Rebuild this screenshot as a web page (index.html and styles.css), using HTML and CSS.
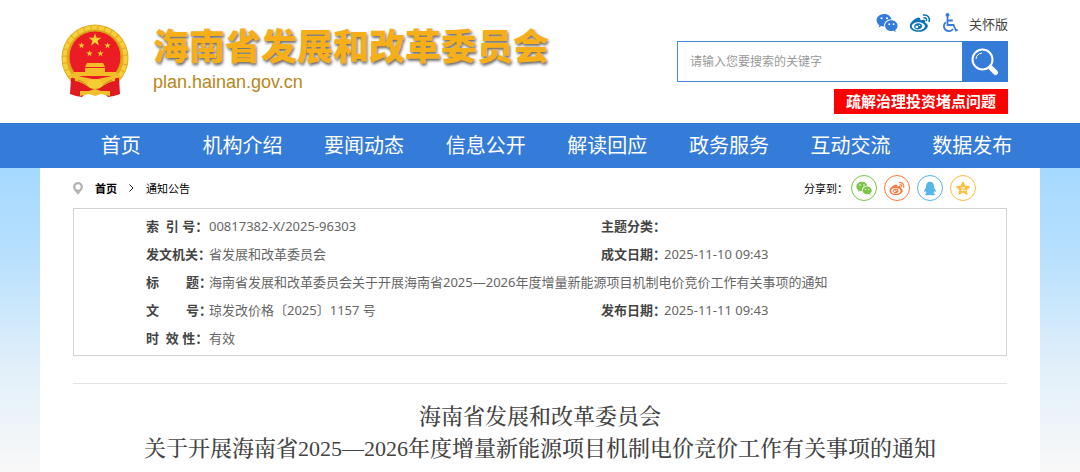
FILE: index.html
```html
<!DOCTYPE html>
<html lang="zh-CN">
<head>
    <meta charset="utf-8">
    <title>海南省发展和改革委员会</title>
    <link rel="stylesheet" href="styles.css">
</head>
<body>
    <svg class="sprite" aria-hidden="true">
        <symbol id="wechat" viewBox="0 0 24 22">
            <path fill="currentColor" fill-rule="evenodd" d="M9 1C4.200 1 .5 4.200.5 8c0 2.200 1.200 4.100 3.100 5.400L2.800 16l3-1.600c1 .3 2.100.5 3.200.5-.9-4.500 3-8.200 8-8C16.200 3.400 13 1 9 1zM6 4.600a1.200 1.200 0 1 1 0 2.400 1.200 1.200 0 0 1 0-2.400zm6 0A1.200 1.200 0 1 1 12 7a1.200 1.200 0 0 1 0-2.400z"/>
            <path fill="currentColor" fill-rule="evenodd" d="M16.800 8c-3.900 0-6.900 2.700-6.900 5.900s3 5.900 6.900 5.900c.8 0 1.700-.1 2.400-.4l2.500 1.400-.7-2.200c1.600-1.100 2.600-2.800 2.600-4.700 0-3.200-3-5.900-6.800-5.900zm-2.300 3.300a1 1 0 1 1 0 2 1 1 0 0 1 0-2zm4.700 0a1 1 0 1 1 0 2 1 1 0 0 1 0-2z"/>
        </symbol>
        <symbol id="weibo" viewBox="0 0 24 22">
            <path fill="currentColor" fill-rule="evenodd" d="M9.300 5.200C6.500 5.900.8 10.400.8 14.200c0 4 4.800 6.500 9.600 6.500 6 0 10.200-3.400 10.200-6.500 0-2-1.500-3-3-3.400.6-1.800.2-3-1.200-3.300-1.200-.3-2.600 0-4 .6.500-2.200-.6-3.400-3.100-2.900zM10.200 10.300c4 0 7.200 1.900 7.200 4.300s-3.200 4.400-7.200 4.400-7.200-2-7.200-4.400 3.200-4.300 7.200-4.300z"/>
            <path fill="currentColor" fill-rule="evenodd" d="M10 11.200c-2.600 0-4.500 1.600-4.500 3.600s1.800 3.300 4.200 3.300c2.600 0 4.700-1.600 4.700-3.700 0-1.900-1.800-3.200-4.400-3.200zM8.500 13.800a1.500 1.500 0 1 1 0 3 1.500 1.500 0 0 1 0-3zm3-.9a.8.8 0 1 1 0 1.600.8.8 0 0 1 0-1.600z"/>
            <path fill="none" stroke="currentColor" stroke-width="1.700" stroke-linecap="round" d="M15.800 2.200c4.300-.7 7.500 2.800 6.200 7.200M16.500 5.300c2-.3 3.200 1.200 2.600 3"/>
        </symbol>
        <symbol id="qq" viewBox="0 0 20 22">
            <path fill="currentColor" d="M10 1C6.300 1 4.300 3.700 4.400 7c0 .8-.5 1.100-.7 2-.1.500.1.900 0 1.200-1.400 1.700-2.500 3.600-2.300 5.300.1 1 .9.700 1.900-.8.300 1.300.8 2.100 1.700 2.800-1.300.4-2 1-2 1.800C3 20.500 4.600 21 6.500 21c1.500 0 2.700-.3 3.500-.9.800.6 2 .9 3.500.9 1.900 0 3.500-.5 3.500-1.700 0-.8-.7-1.400-2-1.800.9-.7 1.400-1.500 1.700-2.800 1 1.500 1.800 1.800 1.900.8.200-1.700-.9-3.600-2.300-5.300-.1-.3.100-.7 0-1.200-.2-.9-.7-1.200-.7-2C15.700 3.700 13.700 1 10 1z"/>
        </symbol>
        <symbol id="qzone" viewBox="0 0 22 22">
            <path fill="currentColor" stroke="currentColor" stroke-width="1.600" stroke-linejoin="round" d="M11 1.500l2.900 6 6.600.9-4.900 4.500 1.300 6.700-5.900-3.300-5.900 3.300 1.300-6.700-4.900-4.500 6.600-.9z"/>
            <path fill="none" stroke="#fff" stroke-width="1.200" d="M7.500 9.800h6l-5.200 4c2.500.4 4.500.4 7.700-.2"/>
        </symbol>
        <symbol id="star" viewBox="-10 -10 20 20">
            <path d="M0-9.500 2.200-3.100H9L3.600 1.100 5.600 7.700 0 3.700l-5.600 4 2-6.600L-9-3.100h6.800z"/>
        </symbol>
    </svg>

    <header class="header container">
        <svg class="emblem" viewBox="0 0 68 74" role="img" aria-label="国徽">
            <circle cx="34" cy="34" r="33.500" fill="#e2a91f"/>
            <circle cx="34" cy="34" r="30.500" fill="none" stroke="#f6d03a" stroke-width="4" stroke-dasharray="6 1"/>
            <circle cx="34" cy="33" r="26" fill="#ec1c24" stroke="#d99b14"/>
            <g fill="#fbd22f">
                <use href="#star" x="27" y="9" width="14" height="14"/>
                <use href="#star" x="17" y="18" width="7" height="7"/>
                <use href="#star" x="43" y="18" width="7" height="7"/>
                <use href="#star" x="25" y="26" width="7" height="7"/>
                <use href="#star" x="36" y="26" width="7" height="7"/>
            </g>
            <path fill="#f3bd27" d="M26 39h16l2 4H24zM24 44h20v4h11l1 4H12l1-4h11z"/>
            <path fill="#e01a20" d="M10 54l7-1 17 3 17-3 7 1 1 16-6 2-6 1-4-4H25l-4 4-6-1-6-2z"/>
            <path fill="none" stroke="#f0bf2a" stroke-width="4" d="M11 50c6 7 14 4 23 8 9-4 17-1 23-8M14 55c8 0 12 7 20 7s12-7 20-7"/>
            <path fill="none" stroke="#c98b13" stroke-width="1" d="M17 56c7 2 11 9 17 9s10-7 17-9"/>
            <ellipse cx="34" cy="60" rx="8" ry="5" fill="#f6cc35"/>
            <path fill="#f0bf2a" d="M19 67h9l6-2 6 2h9v5l-9-2-6 2-6-2-9 2z"/>
        </svg>
        <div class="brand">
            <p class="site-name">海南省发展和改革委员会</p>
            <p class="site-url">plan.hainan.gov.cn</p>
        </div>
        <div class="tools">
            <div class="quick-links">
                <a href="#" aria-label="微信"><svg class="icon-wechat"><use href="#wechat"/></svg></a>
                <a href="#" aria-label="微博"><svg class="icon-weibo"><use href="#weibo"/></svg></a>
                <a href="#" aria-label="无障碍">
                    <svg class="icon-access" viewBox="0 0 16 20">
                        <circle cx="5.500" cy="2" r="2" fill="currentColor"/>
                        <path fill="none" stroke="currentColor" stroke-width="1.800" d="M5.500 4v8h6l2.500 5.500 1.800-.8M5.500 7.500h5.300M3.800 9.200A5 5 0 1 0 11 16"/>
                    </svg>
                </a>
                <a href="#">关怀版</a>
            </div>
            <form class="search">
                <input type="text" placeholder="请输入您要搜索的关键字" aria-label="搜索关键字">
                <button type="button" aria-label="搜索">
                    <svg viewBox="0 0 28 28">
                        <path stroke="#fff" stroke-width="5" stroke-linecap="round" d="M20 20l4.500 4.500"/>
                        <circle cx="11.500" cy="11.500" r="10" fill="none" stroke="#fff" stroke-width="2"/>
                        <path fill="none" stroke="#fff" stroke-width="1" d="M5 11c.3-3.400 2.500-5.600 6-6"/>
                    </svg>
                </button>
            </form>
            <a class="notice" href="#">疏解治理投资堵点问题</a>
        </div>
    </header>

    <nav class="nav">
        <div class="nav-list container">
            <a href="#">首页</a>
            <a href="#">机构介绍</a>
            <a href="#">要闻动态</a>
            <a href="#">信息公开</a>
            <a href="#">解读回应</a>
            <a href="#">政务服务</a>
            <a href="#">互动交流</a>
            <a href="#">数据发布</a>
        </div>
    </nav>

    <div class="page">
        <main class="content container">
            <div class="topbar">
                <div class="breadcrumb">
                    <svg class="pin" viewBox="0 0 10 13">
                        <path fill="#b3b3b3" fill-rule="evenodd" d="M5 0a5 5 0 0 0-5 5c0 3 3 4.500 5 8 2-3.500 5-5 5-8a5 5 0 0 0-5-5zm0 2.300a2.600 2.600 0 1 1 0 5.200 2.600 2.600 0 0 1 0-5.200z"/>
                    </svg>
                    <a class="home" href="#">首页</a>
                    <svg class="arrow" viewBox="0 0 5 8"><path fill="none" stroke="#222" d="M.5.5 4 4 .5 7.500"/></svg>
                    <a href="#">通知公告</a>
                </div>
                <div class="share">
                    <span>分享到：</span>
                    <div class="share-icons">
                        <a class="share-wechat" href="#" aria-label="微信"><svg><use href="#wechat"/></svg></a>
                        <a class="share-weibo" href="#" aria-label="微博"><svg><use href="#weibo"/></svg></a>
                        <a class="share-qq" href="#" aria-label="QQ"><svg><use href="#qq"/></svg></a>
                        <a class="share-qzone" href="#" aria-label="QQ空间"><svg><use href="#qzone"/></svg></a>
                    </div>
                </div>
            </div>

            <div class="info">
                <table>
                    <tr>
                        <th scope="row">索&nbsp;&nbsp;引&nbsp;号：</th>
                        <td class="value">00817382-X/2025-96303</td>
                        <th scope="row">主题分类：</th>
                        <td></td>
                    </tr>
                    <tr>
                        <th scope="row">发文机关：</th>
                        <td>省发展和改革委员会</td>
                        <th scope="row">成文日期：</th>
                        <td>2025-11-10 09:43</td>
                    </tr>
                    <tr>
                        <th scope="row">标&nbsp;&nbsp;&nbsp;&nbsp;&nbsp;&nbsp;&nbsp;&nbsp;题：</th>
                        <td colspan="3">海南省发展和改革委员会关于开展海南省2025—2026年度增量新能源项目机制电价竞价工作有关事项的通知</td>
                    </tr>
                    <tr>
                        <th scope="row">文&nbsp;&nbsp;&nbsp;&nbsp;&nbsp;&nbsp;&nbsp;&nbsp;号：</th>
                        <td>琼发改价格〔2025〕1157 号</td>
                        <th scope="row">发布日期：</th>
                        <td>2025-11-11 09:43</td>
                    </tr>
                    <tr>
                        <th scope="row">时&nbsp;&nbsp;效&nbsp;性：</th>
                        <td colspan="3">有效</td>
                    </tr>
                </table>
            </div>

            <h1 class="title">海南省发展和改革委员会<br>关于开展海南省2025—2026年度增量新能源项目机制电价竞价工作有关事项的通知</h1>
        </main>
    </div>
</body>
</html>
```

FILE: styles.css
```css
* {
    box-sizing: border-box;
}
body {
    margin: 0;
    font-family: "Noto Sans", "Noto Sans CJK SC", sans-serif;
    font-size: 13px;
    color: #666;
    background: #fff;
}
p {
    margin: 0;
}
a {
    color: inherit;
    text-decoration: none;
}
svg {
    display: block;
}
.sprite {
    display: none;
}
.container {
    max-width: 1000px;
    margin: 0 auto;
}

/* header */
.header {
    display: flex;
    align-items: flex-start;
    padding: 12px 32px 9px 21px;
}
.emblem {
    width: 68px;
    height: 74px;
    margin-top: 12px;
}
.brand {
    flex: 1;
    padding: 10px 0 0 24px;
}
.site-name {
    font-family: "Noto Sans CJK SC", sans-serif;
    font-size: 36px;
    line-height: 44px;
    font-weight: 900;
    color: #f6ae19;
    text-shadow: 1px 2px 3px rgba(0, 0, 0, 0.6);
    white-space: nowrap;
}
.site-url {
    font-family: "Liberation Sans", Arial, sans-serif;
    font-size: 18px;
    line-height: 32px;
    color: #b8861b;
}
.tools {
    width: 331px;
    display: flex;
    flex-direction: column;
    align-items: flex-end;
}
.quick-links {
    display: flex;
    align-items: center;
    gap: 11px;
    height: 22px;
    margin-bottom: 7px;
    color: #357bd8;
}
.quick-links a:last-child {
    color: #444;
}
.icon-wechat {
    width: 22px;
    height: 20px;
}
.icon-weibo {
    width: 22px;
    height: 20px;
    color: #0b72b5;
}
.icon-access {
    width: 16px;
    height: 20px;
}
.search {
    display: flex;
    width: 100%;
    height: 41px;
    margin-bottom: 7px;
}
.search input {
    flex: 1;
    min-width: 0;
    padding: 0 12px;
    border: 1px solid #4a8bdd;
    border-right: none;
    font-family: inherit;
    font-size: 12px;
    outline: none;
}
.search input::placeholder {
    color: #999;
}
.search button {
    width: 46px;
    padding: 0 9px;
    border: none;
    background: #357bd8;
    cursor: pointer;
}
.notice {
    padding: 0 12px;
    font-size: 15px;
    line-height: 25px;
    font-weight: bold;
    color: #fff;
    background: #f00;
}

/* navigation */
.nav {
    background: #357bd8;
}
.nav-list {
    display: grid;
    grid-template-columns: repeat(8, 1fr);
    padding: 0 7px 0 20px;
}
.nav-list a {
    font-size: 20px;
    line-height: 45px;
    color: #fff;
    text-align: center;
    white-space: nowrap;
}

/* page body */
.page {
    background: linear-gradient(#a5d9ff, #b8e0fd 90px, #e2f0fa 200px, #f8f8f8 304px);
}
.content {
    padding: 0 33px;
    background: #fff;
}
.topbar {
    display: flex;
    justify-content: space-between;
    align-items: center;
    height: 40px;
    font-size: 11px;
    color: #000;
}
.breadcrumb {
    display: flex;
    align-items: center;
    gap: 12px;
}
.pin {
    width: 10px;
    height: 13px;
}
.arrow {
    width: 5px;
    height: 8px;
}
.home {
    font-weight: bold;
}
.share {
    display: flex;
    align-items: center;
    gap: 3px;
    padding-right: 31px;
}
.share-icons {
    display: flex;
    gap: 7px;
}
.share a {
    display: flex;
    align-items: center;
    justify-content: center;
    width: 26px;
    height: 26px;
    border: 1px solid;
    border-radius: 50%;
}
.share svg {
    width: 16px;
    height: 15px;
}
.share-wechat {
    color: #7bc549;
}
.share-weibo {
    color: #ff763b;
}
.share-qq {
    color: #56b6e7;
}
.share-qzone {
    color: #fdbe3d;
}

/* document info */
.info {
    padding: 3px 72px;
    border: 1px solid #d3d3d3;
}
.info table {
    width: 100%;
    table-layout: fixed;
    border-collapse: collapse;
}
.info th,
.info td {
    height: 28px;
    padding: 0;
    line-height: 20px;
    text-align: left;
    white-space: nowrap;
}
.info th {
    width: 63px;
    color: #444;
}
.info .value {
    width: 392px;
}
.title {
    margin: 27px 0 0;
    padding: 17px 0 8px;
    border-top: 1px solid #e4e4e4;
    font-family: "Liberation Serif", "Noto Serif CJK SC", "Noto Sans CJK SC", serif;
    font-size: 22px;
    line-height: 32px;
    font-weight: 500;
    color: #444;
    text-align: center;
}
```
